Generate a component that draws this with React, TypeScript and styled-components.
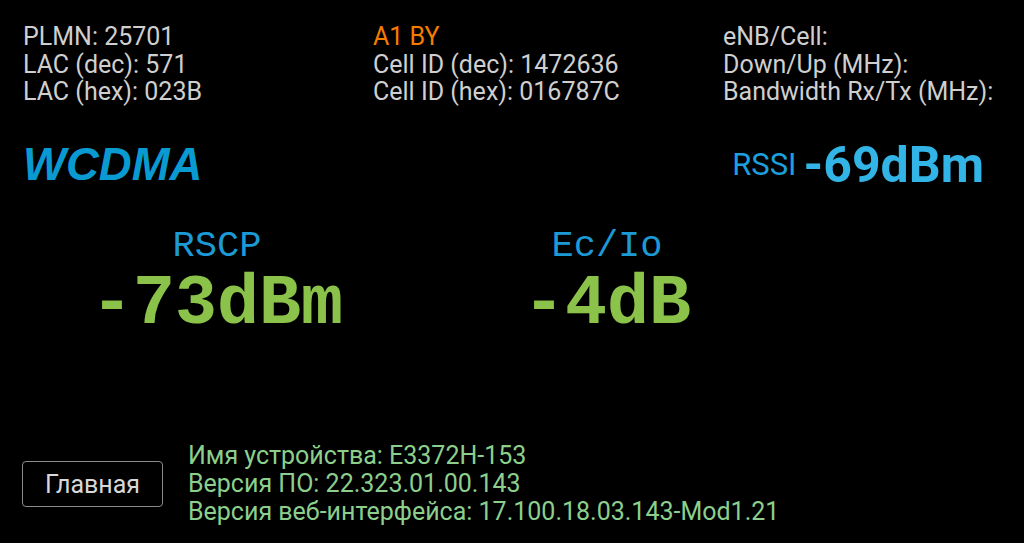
import React from "react";
import styled, { createGlobalStyle } from "styled-components";

const Global = createGlobalStyle`
  html, body { margin: 0; padding: 0; background: #000; }
  body { font-family: Roboto, "Noto Sans", sans-serif; }
`;

const Page = styled.div`
  box-sizing: border-box;
  min-height: 100vh;
  display: flex;
  flex-direction: column;
  padding: 23px 23px 17px 23px;
  background: #000;
`;

const InfoGrid = styled.div`
  display: grid;
  grid-template-columns: 350px 350px 1fr;
`;

const InfoColumn = styled.div`
  display: flex;
  flex-direction: column;
`;

const InfoLine = styled.div<{ $accent?: boolean }>`
  font-family: Roboto, sans-serif;
  font-size: 25px;
  line-height: 27.5px;
  color: ${(p) => (p.$accent ? "#f57c00" : "#cfcfcf")};
  white-space: nowrap;
`;

const ModeRow = styled.div`
  display: flex;
  align-items: center;
  justify-content: space-between;
  margin-top: 34px;
  height: 50px;
  padding-right: 17px;
`;

const ModeName = styled.div`
  font-family: "Liberation Sans", Arial, sans-serif;
  font-weight: bold;
  font-style: italic;
  font-size: 45.5px;
  line-height: 50px;
  color: #0a9ad2;
`;

const Rssi = styled.div`
  display: flex;
  align-items: center;
  gap: 7px;
`;

const RssiLabel = styled.span`
  font-family: Roboto, sans-serif;
  font-size: 31px;
  color: #1c9fdc;
`;

const RssiValue = styled.span`
  font-family: Roboto, sans-serif;
  font-weight: bold;
  font-size: 50px;
  color: #33b4e6;
`;

const Metrics = styled.div`
  display: grid;
  grid-template-columns: 388px 392px;
  margin-top: 36px;
`;

const Metric = styled.div`
  display: flex;
  flex-direction: column;
  align-items: center;
  gap: 4px;
`;

const MetricLabel = styled.div`
  font-family: "Liberation Mono", "Courier New", monospace;
  font-size: 37px;
  line-height: 40px;
  color: #1c9ad6;
`;

const MetricValue = styled.div`
  font-family: "Liberation Mono", "Courier New", monospace;
  font-weight: bold;
  font-size: 70px;
  line-height: 70px;
  color: #8bc34a;
`;

const Footer = styled.div`
  margin-top: auto;
  display: flex;
  align-items: center;
  gap: 25px;
`;

const HomeButton = styled.button`
  box-sizing: border-box;
  width: 141px;
  height: 46px;
  margin-left: -1px;
  padding: 0;
  background: #000;
  border: 1px solid #8a8a8a;
  border-radius: 4px;
  font-family: Roboto, sans-serif;
  font-size: 25px;
  color: #d8d8d8;
  cursor: pointer;
`;

const DeviceInfo = styled.div`
  display: flex;
  flex-direction: column;
`;

const DeviceLine = styled.div`
  font-family: Roboto, sans-serif;
  font-size: 25px;
  line-height: 28px;
  color: #8ccf8c;
  white-space: nowrap;
`;

export default function App() {
  return (
    <>
      <Global />
      <Page>
        <InfoGrid>
          <InfoColumn>
            <InfoLine>PLMN: 25701</InfoLine>
            <InfoLine>LAC (dec): 571</InfoLine>
            <InfoLine>LAC (hex): 023B</InfoLine>
          </InfoColumn>
          <InfoColumn>
            <InfoLine $accent>A1 BY</InfoLine>
            <InfoLine>Cell ID (dec): 1472636</InfoLine>
            <InfoLine>Cell ID (hex): 016787C</InfoLine>
          </InfoColumn>
          <InfoColumn>
            <InfoLine>eNB/Cell:</InfoLine>
            <InfoLine>Down/Up (MHz):</InfoLine>
            <InfoLine>Bandwidth Rx/Tx (MHz):</InfoLine>
          </InfoColumn>
        </InfoGrid>
        <ModeRow>
          <ModeName>WCDMA</ModeName>
          <Rssi>
            <RssiLabel>RSSI</RssiLabel>
            <RssiValue>-69dBm</RssiValue>
          </Rssi>
        </ModeRow>
        <Metrics>
          <Metric>
            <MetricLabel>RSCP</MetricLabel>
            <MetricValue>-73dBm</MetricValue>
          </Metric>
          <Metric>
            <MetricLabel>Ec/Io</MetricLabel>
            <MetricValue>-4dB</MetricValue>
          </Metric>
        </Metrics>
        <Footer>
          <HomeButton>Главная</HomeButton>
          <DeviceInfo>
            <DeviceLine>Имя устройства: E3372H-153</DeviceLine>
            <DeviceLine>Версия ПО: 22.323.01.00.143</DeviceLine>
            <DeviceLine>Версия веб-интерфейса: 17.100.18.03.143-Mod1.21</DeviceLine>
          </DeviceInfo>
        </Footer>
      </Page>
    </>
  );
}
